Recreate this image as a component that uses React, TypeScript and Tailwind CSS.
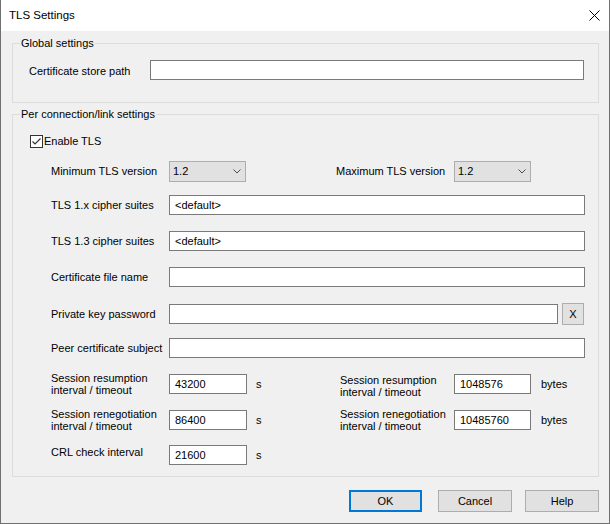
import type { ReactNode } from "react";

const FONT = { fontFamily: '"Liberation Sans", Arial, sans-serif' };

function Edit({ value, className = "" }: { value?: string; className?: string }) {
  return (
    <div
      className={`flex h-[20px] items-center border border-[#7a7a7a] bg-white pl-[5px] text-[11px] text-black ${className}`}
    >
      {value}
    </div>
  );
}

function Combo({ value }: { value: string }) {
  return (
    <div className="flex h-[21px] w-[77px] items-center justify-between border border-[#adadad] bg-[#e1e1e1] pl-[3px] pr-[4px] text-[11px]">
      <span>{value}</span>
      <svg width="8" height="5" viewBox="0 0 8 5">
        <polyline points="0.5,0.5 4,4 7.5,0.5" fill="none" stroke="#4d4d4d" strokeWidth="1" />
      </svg>
    </div>
  );
}

function Button({ label, primary, width }: { label: string; primary?: boolean; width: string }) {
  return (
    <div
      className={`flex h-[22px] items-center justify-center bg-[#e1e1e1] text-[11px] ${width} ${
        primary ? "border-2 border-[#0078d7]" : "border border-[#adadad]"
      }`}
    >
      {label}
    </div>
  );
}

function Group({ title, className = "", children }: { title: string; className?: string; children: ReactNode }) {
  return (
    <fieldset className={`border border-[#dcdcdc] ${className}`}>
      <legend className="ml-[7px] px-[1px] text-[11px] leading-[14px]">{title}</legend>
      {children}
    </fieldset>
  );
}

function Row({ label, children, className = "" }: { label: string; children: ReactNode; className?: string }) {
  return (
    <div className={`flex items-center ${className}`}>
      <div className="w-[118px] shrink-0 text-[11px]">{label}</div>
      {children}
    </div>
  );
}

function TwoLine({ a, b, width, className = "" }: { a: string; b: string; width: string; className?: string }) {
  return (
    <div className={`${width} shrink-0 text-[11px] leading-[12px] ${className}`}>
      <div>{a}</div>
      <div>{b}</div>
    </div>
  );
}

export default function App() {
  return (
    <div
      className="flex h-[524px] w-[610px] flex-col border-x border-b border-[#707070] bg-[#f0f0f0] text-black"
      style={FONT}
    >
      <div className="flex h-[31px] shrink-0 items-center justify-between bg-white pl-[8px] pr-[9px]">
        <span className="text-[11.5px]">TLS Settings</span>
        <svg width="11" height="11" viewBox="0 0 11 11">
          <path d="M0.5 0.5 L10.5 10.5 M10.5 0.5 L0.5 10.5" stroke="#000" strokeWidth="1" />
        </svg>
      </div>

      <div className="flex flex-1 flex-col pl-[11px] pr-[10px]">
        <Group title="Global settings" className="mt-[5px]">
          <div className="flex items-center pb-[22px] pl-[16px] pr-[14px] pt-[10px]">
            <div className="w-[121px] shrink-0 pt-[2px] text-[11px]">Certificate store path</div>
            <Edit className="flex-1" />
          </div>
        </Group>

        <Group title="Per connection/link settings" className="mt-[4px]">
          <div className="pb-[11px] pl-[38px] pr-[13px]">
            <div className="-ml-[21px] mt-[14px] flex h-[13px] items-center">
              <div className="flex h-[13px] w-[13px] items-center justify-center border border-[#333] bg-white">
                <svg width="11" height="11" viewBox="0 0 11 11">
                  <polyline points="1.5,5.5 4,8 9.5,2.5" fill="none" stroke="#333" strokeWidth="1.2" />
                </svg>
              </div>
              <span className="ml-[1px] text-[11px]">Enable TLS</span>
            </div>

            <div className="mt-[13px] flex h-[21px] items-center">
              <div className="flex w-[285px] shrink-0 items-center">
                <div className="w-[118px] shrink-0 text-[11px]">Minimum TLS version</div>
                <Combo value="1.2" />
              </div>
              <div className="w-[118px] shrink-0 text-[11px]">Maximum TLS version</div>
              <Combo value="1.2" />
            </div>

            <Row label="TLS 1.x cipher suites" className="mt-[13px]">
              <Edit value="<default>" className="flex-1" />
            </Row>
            <Row label="TLS 1.3 cipher suites" className="mt-[16px]">
              <Edit value="<default>" className="flex-1" />
            </Row>
            <Row label="Certificate file name" className="mt-[16px]">
              <Edit className="flex-1" />
            </Row>
            <Row label="Private key password" className="mt-[16px]">
              <Edit className="flex-1" />
              <div className="ml-[4px] mr-[1px] flex h-[22px] w-[22px] items-center justify-center border border-[#adadad] bg-[#e1e1e1] text-[11px]">
                X
              </div>
            </Row>
            <Row label="Peer certificate subject" className="mt-[13px]">
              <Edit className="flex-1" />
            </Row>

            <div className="mt-[14px] flex items-center">
              <div className="flex w-[289px] shrink-0 items-center">
                <TwoLine a="Session resumption" b="interval / timeout" width="w-[118px]" />
                <Edit value="43200" className="w-[78px]" />
                <span className="ml-[9px] text-[11px]">s</span>
              </div>
              <TwoLine
                a="Session resumption"
                b="interval / timeout"
                width="w-[114px]"
                className="translate-y-[2px]"
              />
              <Edit value="1048576" className="w-[77px]" />
              <span className="ml-[10px] text-[11px]">bytes</span>
            </div>

            <div className="mt-[12px] flex items-center">
              <div className="flex w-[289px] shrink-0 items-center">
                <TwoLine a="Session renegotiation" b="interval / timeout" width="w-[118px]" />
                <Edit value="86400" className="w-[78px]" />
                <span className="ml-[9px] text-[11px]">s</span>
              </div>
              <TwoLine a="Session renegotiation" b="interval / timeout" width="w-[114px]" />
              <Edit value="10485760" className="w-[77px]" />
              <span className="ml-[10px] text-[11px]">bytes</span>
            </div>

            <div className="mt-[13px] flex items-start">
              <div className="w-[118px] shrink-0 text-[11px] leading-[14px]">CRL check interval</div>
              <Edit value="21600" className="w-[78px]" />
              <span className="ml-[9px] self-center text-[11px]">s</span>
            </div>
          </div>
        </Group>

        <div className="mt-[13px] flex justify-end">
          <Button label="OK" primary width="w-[73px]" />
          <div className="ml-[16px]">
            <Button label="Cancel" width="w-[74px]" />
          </div>
          <div className="ml-[13px]">
            <Button label="Help" width="w-[74px]" />
          </div>
        </div>
      </div>
    </div>
  );
}
